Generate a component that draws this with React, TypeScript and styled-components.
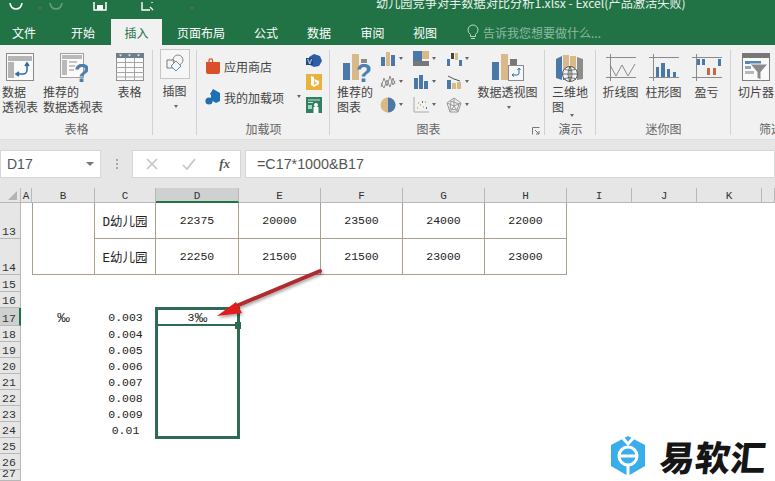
import React from 'react';
import styled, { createGlobalStyle } from 'styled-components';

const Global = createGlobalStyle`
  html, body { margin: 0; padding: 0; background: #fff; }
  #root { width: 775px; height: 481px; overflow: hidden; }
  * { box-sizing: border-box; }
`;
const CJK = `"Noto Sans CJK SC", "Liberation Sans", sans-serif`;
const MONO = `"Liberation Mono", "Noto Sans CJK SC", monospace`;

const Page = styled.div`
  position: relative; width: 775px; height: 481px; overflow: hidden;
  display: flex; flex-direction: column; font-family: ${CJK}; color: #444;
`;
const TitleBar = styled.header`
  height: 19px; flex: none; background: #217346; display: flex; align-items: flex-end;
  padding-bottom: 8px; overflow: hidden; color: #fff;
`;
const Qat = styled.div`width: 376px; flex: none; display: flex; align-items: flex-end;`;
const QatSlot = styled.span<{ $w: number; $faded?: boolean }>`
  width: ${p => p.$w}px; flex: none; display: flex; justify-content: center; align-items: flex-end;
  opacity: ${p => (p.$faded ? 0.3 : 1)};
`;
const DocTitle = styled.div`font-size: 12.2px; line-height: 16px; white-space: nowrap; color: #e8f1ec;`;
const TabBar = styled.nav`height: 26px; flex: none; background: #217346; display: flex;`;
const Tab = styled.div<{ $w: number; $pr?: number; $active?: boolean }>`
  width: ${p => p.$w}px; flex: none; display: flex; align-items: center; justify-content: center;
  padding-right: ${p => p.$pr ?? 0}px;
  font-size: 12px; color: ${p => (p.$active ? '#217346' : '#fff')};
  background: ${p => (p.$active ? '#f1f1f1' : 'transparent')};
`;
const TellMe = styled.div`
  margin-left: 16px; display: flex; align-items: center; gap: 4px; color: #8fb9a3; font-size: 12px;
`;
const Ribbon = styled.section`
  height: 94px; flex: none; background: #f1f1f1; display: flex; overflow: hidden;
`;
const Group = styled.div<{ $w: number; $last?: boolean }>`
  position: relative; width: ${p => p.$w}px; flex: none; display: flex; flex-direction: column;
  &::after {
    content: ''; display: ${p => (p.$last ? 'none' : 'block')};
    position: absolute; right: 0; top: 5px; bottom: 4px; width: 1px; background: #d2d2d2;
  }
`;
const Tools = styled.div<{ $pad?: number }>`
  height: 76px; display: flex; padding-left: ${p => p.$pad ?? 0}px;
`;
const GroupLabel = styled.div<{ $shift?: number }>`
  height: 18px; line-height: 16px; font-size: 12px; text-align: center; color: #666;
  padding-right: ${p => p.$shift ?? 0}px; white-space: nowrap;
`;
const LargeButton = styled.div<{ $w: number }>`
  width: ${p => p.$w}px; flex: none; display: flex; flex-direction: column; align-items: center;
  padding-top: 8px; font-size: 12px; line-height: 15px; color: #444; white-space: nowrap;
`;
const IconBox = styled.div`height: 31px; display: flex; align-items: flex-start; justify-content: center;`;
const Caret = styled.span`
  display: inline-block; width: 0; height: 0; border-left: 2.5px solid transparent; border-right: 2.5px solid transparent;
  border-top: 3px solid #666; vertical-align: middle; margin: 0 0 1px 3px;
`;
const AddinCaret = styled(Caret)`margin-left: 10px;`;
const NameCaret = styled(Caret)`
  border-top: 4px solid #777; border-left-width: 4px; border-right-width: 4px;
`;
const CaretLine = styled.div`height: 15px; line-height: 13px;`;
const IllustrationFrame = styled.div`
  width: 30px; height: 30px; margin-top: -4px; margin-bottom: 4px; background: #f6f6f6; border: 1px solid #c6c6c6;
  display: flex; align-items: center; justify-content: center;
`;
const AddinColumn = styled.div`
  width: 109px; flex: none; display: flex; flex-direction: column; padding: 13px 0 0 8px; gap: 15px;
`;
const AddinRow = styled.div`display: flex; align-items: center; gap: 3px; font-size: 12px; height: 16px; white-space: nowrap; color: #444;`;
const AddinSide = styled.div`display: flex; flex-direction: column; gap: 7px; padding-top: 9px; width: 16px;`;
const ChartGrid = styled.div`
  width: 99px; flex: none; display: grid; grid-template-columns: repeat(3, 33px); grid-auto-rows: 23px; padding-top: 2px;
`;
const ChartCell = styled.div`display: flex; align-items: center;`;
const Launcher = styled.svg`position: absolute; right: 5px; bottom: 4px;`;

const FormulaArea = styled.section`
  height: 49px; flex: none; background: #e6e6e6; display: flex; align-items: flex-start; padding-top: 10px;
  border-top: 1px solid #dedede;
`;
const NameBox = styled.div`
  width: 101px; height: 28px; flex: none; background: #fff; border: 1px solid #d6d6d6; display: flex; align-items: center;
  justify-content: space-between; padding: 0 6px 0 6px; font: 14px "Liberation Sans", sans-serif; color: #555;
`;
const Grip = styled.div`
  width: 31px; flex: none; height: 28px; display: flex; flex-direction: column; align-items: center; justify-content: center; gap: 2px;
`;
const GripDot = styled.i`display: block; width: 2px; height: 2px; background: #a8a8a8;`;
const FxBox = styled.div`
  width: 109px; height: 28px; flex: none; background: #fff; border: 1px solid #d6d6d6; display: flex; align-items: center; justify-content: space-between; padding: 0 10px 0 12px;
`;
const Fx = styled.span`font: italic bold 13px "Liberation Serif", serif; color: #555;`;
const FormulaBox = styled.div`
  margin-left: 4px; flex: 1; height: 28px; background: #fff; border: 1px solid #d6d6d6; display: flex; align-items: center;
  padding-left: 11px; font: 14.3px "Liberation Sans", sans-serif; color: #555;
`;

const Sheet = styled.main`
  flex: none; height: 293px; display: grid; background: #fff; position: relative;
  grid-template-columns: 21px 11px 63px 61px 83px 82px 82px 82px 82px 65px 65px 65px 13px;
  grid-template-rows: 15px 36px 36px 17px 16px 18px repeat(7, 16px) 16px 16px 11px;
  font: 11.5px ${MONO}; color: #222;
`;
const Corner = styled.div`
  grid-column: 1; grid-row: 1; background: #e6e6e6; border-right: 1px solid #b8b8b8; border-bottom: 1px solid #b8b8b8;
  display: flex; align-items: flex-end; justify-content: flex-end; padding: 0 3px 2px 0;
`;
const ColHead = styled.div<{ $c: number; $on?: boolean }>`
  grid-column: ${p => p.$c}; grid-row: 1; font-size: 11px; line-height: 16px; text-align: center; color: #333;
  background: ${p => (p.$on ? '#cfd1d0' : '#e6e6e6')};
  border-right: 1px solid #b8b8b8;
  border-bottom: ${p => (p.$on ? '2px solid #217346' : '1px solid #b8b8b8')};
`;
const RowHead = styled.div<{ $r: number; $on?: boolean }>`
  grid-column: 1; grid-row: ${p => p.$r}; font-size: 11.5px; line-height: 13px; padding-left: 2px;
  display: flex; align-items: flex-end; overflow: hidden; color: #333;
  background: ${p => (p.$on ? '#cfd1d0' : '#e6e6e6')};
  border-bottom: 1px solid #b8b8b8;
  border-right: ${p => (p.$on ? '2px solid #217346' : '1px solid #b8b8b8')};
`;
const Cell = styled.div<{ $c: number; $r: number; $span?: number; $rule?: boolean; $left?: boolean }>`
  grid-column: ${p => p.$c}; grid-row: ${p => p.$r} / span ${p => p.$span ?? 1};
  display: flex; align-items: center; justify-content: center; white-space: nowrap; letter-spacing: 0;
  ${p => p.$rule && 'border-right: 1px solid #a99f8c; border-bottom: 1px solid #a99f8c;'}
  ${p => p.$left && 'border-left: 1px solid #a99f8c;'}
`;
const NameCell = styled(Cell)`font-size: 12.5px;`;
const PerMille = styled.span`font: 13px "Liberation Sans", sans-serif;`;
const Selection = styled.div`
  grid-column: 5; grid-row: 6 / span 8; margin: -1px -1px -1px -1px; position: relative;
  border: 3px solid #2f6b52; z-index: 2; pointer-events: none;
`;
const ActiveEdge = styled.div`height: 16px; border-bottom: 2px solid #2f6b52; margin-right: 2px;`;
const Handle = styled.i`
  position: absolute; right: -4px; top: 12px; width: 6px; height: 7px; background: #2f6b52;
`;
const Arrow = styled.svg`position: absolute; left: 205px; top: 70px; z-index: 3; overflow: visible;`;
const Brand = styled.div`
  position: absolute; right: 0; bottom: 0; width: 172px; height: 50px; display: flex; align-items: center; padding-left: 7px; gap: 14px; z-index: 4;
`;
const BrandName = styled.div`
  font: 900 35px/40px ${CJK}; color: #151515; letter-spacing: 0.5px; transform: skewX(-6deg); white-space: nowrap;
`;

type S = { children: React.ReactNode; w?: number; h?: number };
const Svg = ({ children, w = 30, h = 30 }: S) => <svg width={w} height={h} viewBox={`0 0 ${w} ${h}`}>{children}</svg>;

const BLUE = '#4a78a8', TAN = '#d9b987', GR = '#8e8e8e';

const PivotIcon = () => (
  <Svg w={30} h={30}>
    <rect x="1.5" y="0.5" width="27" height="27" fill="#fafafa" stroke="#8a8a8a" />
    <rect x="3" y="3" width="24" height="5" fill="#b5b5b5" /><rect x="3" y="9" width="6" height="16" fill="#b5b5b5" />
    <path d="M22 11v6a4 4 0 0 1-4 4h-6M20 13l2-3 2 3M14 19l-3 2 3 2" fill="none" stroke="#2b6ea8" strokeWidth="1.6" />
  </Svg>
);
const RecPivotIcon = () => (
  <Svg w={30} h={32}>
    <rect x="2.5" y="0.5" width="23" height="24" fill="#fafafa" stroke="#a0a0a0" />
    <rect x="4" y="2" width="20" height="4" fill="#b9b9b9" /><rect x="4" y="7" width="5" height="15" fill="#b9b9b9" />
    <path d="M11 9h8M11 13h6M11 17h5" stroke="#c4c4c4" strokeWidth="2" />
    <text x="16" y="29" fontFamily="Liberation Sans" fontWeight="700" fontSize="26" fill="#4a7fb0">?</text>
  </Svg>
);
const TableIcon = () => (
  <Svg w={30} h={30}>
    <rect x="1.5" y="0.5" width="27" height="27" fill="#fafafa" stroke="#8f8f8f" />
    <rect x="1" y="0" width="28" height="5" fill="#6d7f8e" />
    <path d="M1 9.5h28M1 14.5h28M1 19.5h28M1 24h28M10.5 5v23M19.5 5v23" stroke="#a5a5a5" />
    <path d="M4 1.5h3l-1.5 2zM13 1.5h3l-1.5 2zM22 1.5h3l-1.5 2z" fill="#eee" />
  </Svg>
);
const ShapesIcon = () => (
  <Svg w={20} h={20}>
    <path d="M2 6h7v8H2z" fill="none" stroke="#7a7a7a" />
    <circle cx="13" cy="6" r="5" fill="none" stroke="#8a8a8a" />
    <path d="M11 7l5 5-5 5-5-5z" fill="#f6f6f6" stroke="#5f8fb5" />
  </Svg>
);
const StoreIcon = () => (
  <Svg w={16} h={16}>
    <path d="M1 4h14v10q0 2-2 2H3q-2 0-2-2z" fill="#d9502a" />
    <path d="M4 5V2.5Q4 .8 5.8 .8t1.8 1.7V5" fill="none" stroke="#d9502a" strokeWidth="1.2" />
  </Svg>
);
const AddinIcon = () => (
  <Svg w={16} h={16}>
    <path d="M8 0l7 4v8l-4 2-5-3V6l-1-1z" fill="#1f6fb5" /><circle cx="4" cy="12" r="3.6" fill="#1f6fb5" />
  </Svg>
);
const VisioIcon = () => (
  <Svg w={16} h={13}>
    <path d="M3 3l5-3 6 2 2 5-3 5-5 1-4-2z" fill="#2c5fa8" /><rect x="0" y="4" width="7" height="7" fill="#1d4a8c" />
    <text x="1.2" y="10" fill="#fff" fontSize="7" fontFamily="Liberation Sans">V</text>
  </Svg>
);
const BingIcon = () => (
  <Svg w={16} h={16}><rect width="16" height="16" fill="#e9b23a" /><path d="M5 2l3 1v8l3-2-2-1-1-3 5 2v3l-5 3-3-2z" fill="#fff" /></Svg>
);
const PeopleIcon = () => (
  <Svg w={16} h={16}>
    <rect width="16" height="16" fill="#2f7f62" /><path d="M2 3h12M2 5.5h5" stroke="#cfe4da" />
    <circle cx="10" cy="8" r="2" fill="#fff" /><rect x="7.5" y="10" width="5" height="6" fill="#fff" /><rect x="2" y="8" width="4" height="4" fill="#a9d2c0" />
  </Svg>
);
const RecChartIcon = () => (
  <Svg w={32} h={32}>
    <rect x="4" y="10" width="7" height="17" fill={BLUE} /><rect x="13" y="1" width="7" height="26" fill={TAN} />
    <rect x="22" y="6" width="6" height="4" fill="#8a8a8a" />
    <text x="17" y="29" fontFamily="Liberation Sans" fontWeight="700" fontSize="26" fill="#4a7fb0">?</text>
  </Svg>
);
const small: Record<string, React.ReactNode> = {
  col: <><rect x="1" y="6" width="4" height="9" fill={BLUE} /><rect x="6" y="1" width="4" height="14" fill={TAN} /><rect x="11" y="4" width="4" height="11" fill={BLUE} /></>,
  tree: <><rect x="0" y="0" width="9" height="10" fill={BLUE} /><rect x="9" y="0" width="7" height="8" fill={TAN} /><rect x="0" y="10" width="16" height="5" fill="#777" /></>,
  water: <><path d="M1 15V8h3v7zM5 8V2h3v6zM9 2h3v7H9zM13 9h3v6h-3z" fill={BLUE} /><path d="M5 8V2h3v6z" fill="#444" /><path d="M9 2h3v7H9z" fill={TAN} /></>,
  line: <path d="M1 13l3-9 3 8 3-10 3 9 2-4M1 9l3 5 3-8 3 7 3-9 2 6" fill="none" stroke={GR} />,
  stat: <><rect x="1" y="4" width="4" height="11" fill={BLUE} /><rect x="6" y="1" width="4" height="14" fill={BLUE} /><rect x="11" y="7" width="4" height="8" fill={BLUE} /></>,
  combo: <><rect x="1" y="6" width="4" height="9" fill={BLUE} /><rect x="6" y="9" width="4" height="6" fill={TAN} /><rect x="11" y="8" width="4" height="7" fill={TAN} /><path d="M2 2l6 3 6 2" stroke="#555" fill="none" /></>,
  pie: <><circle cx="8" cy="8" r="7.5" fill={TAN} /><path d="M8 8V.5a7.5 7.5 0 0 1 0 15z" fill={BLUE} /></>,
  scatter: <><path d="M1 0v15h15" fill="none" stroke="#aaa" /><path d="M4 11h1M7 8h1M10 10h1M12 5h1M5 6h1" stroke={TAN} strokeWidth="2" /><path d="M9 5h1M13 11h1" stroke={BLUE} strokeWidth="2" /></>,
  radar: <path d="M8 1l7 5-3 9H4L1 6zM8 1v8M1 6l7 3 7-3M4 15l4-6 4 6M5 4l8 3-2 6-7-1z" fill="none" stroke="#9a9a9a" />,
};
const SmallChart = ({ k }: { k: string }) => <Svg w={16} h={16}>{small[k]}</Svg>;

const PivotChartIcon = () => (
  <Svg w={32} h={30}>
    <rect x="0" y="9" width="7" height="18" fill={BLUE} /><rect x="9" y="1" width="7" height="26" fill={TAN} /><rect x="18" y="6" width="7" height="10" fill="#777" />
    <rect x="16.5" y="12.5" width="15" height="15" fill="#f7f7f7" stroke="#8a8a8a" />
    <path d="M27 16v4a2 2 0 0 1-2 2h-4M25.5 17l1.5-2 1.5 2M22 20.5l-2 1.5 2 1.5" fill="none" stroke="#2b6ea8" />
  </Svg>
);
const MapIcon = () => (
  <Svg w={32} h={30}>
    <path d="M2 6l6-3v24l-6-2z" fill={BLUE} /><path d="M9 2h6v15H9z" fill={TAN} /><path d="M16 3h6v14h-6z" fill={TAN} /><path d="M23 4l6 2v20l-6 1z" fill="#8d8d8d" />
    <path d="M9 17v10h13V17z" fill={BLUE} />
    <circle cx="16" cy="21" r="7.5" fill="#f4f4f4" stroke="#555" /><path d="M8.5 21h15M16 13.500v15M11 16.500q5 2 10 0M11 25.500q5-2 10 0M16 13.500q-4 7.500 0 15M16 13.500q4 7.500 0 15" fill="none" stroke="#555" strokeWidth=".8" />
  </Svg>
);
const SparkFrame = ({ children }: { children: React.ReactNode }) => (
  <Svg w={32} h={30}><path d="M1 4.500h30M1 24.500h30M5.500 1v27" stroke="#8a8a8a" fill="none" />{children}</Svg>
);
const SparkLine = () => <SparkFrame><path d="M5 12l6 11 6-11 6 11 7-12" fill="none" stroke="#8a8a8a" /></SparkFrame>;
const SparkCol = () => <SparkFrame><path d="M8 14h3v10H8zM13 10h4v14h-4zM19 16h3v8h-3zM25 19h3v5h-3z" fill={BLUE} /></SparkFrame>;
const SparkWin = () => <SparkFrame><path d="M6 6h3v6H6zM11 6h3v6h-3zM27 6h3v7h-3z" fill={BLUE} /><path d="M16 15h3v7h-3zM22 15h3v7h-3z" fill="#bf6a45" /></SparkFrame>;
const SlicerIcon = () => (
  <Svg w={30} h={30}>
    <rect x="1.500" y="0.500" width="27" height="27" fill="#fafafa" stroke="#7d7d7d" />
    <rect x="1" y="0" width="28" height="5" fill="#777" />
    <rect x="4" y="8" width="16" height="3" fill="#5a86b3" /><rect x="4" y="18" width="9" height="3" fill="#b9b9b9" /><rect x="4" y="13" width="6" height="3" fill="#8da9c4" />
    <path d="M9 11h18l-7 8v8l-4-2v-6z" fill="#8a8a8a" stroke="#fafafa" />
  </Svg>
);

const CancelX = () => <Svg w={14} h={14}><path d="M2 2l10 10M12 2L2 12" stroke="#c4c4c4" strokeWidth="1.6" /></Svg>;
const CheckMark = () => <Svg w={14} h={14}><path d="M1 8l4 4 8-10" fill="none" stroke="#c4c4c4" strokeWidth="1.6" /></Svg>;
const Bulb = () => <Svg w={12} h={16}><path d="M3.500 10.500Q1 8.500 1 6a5 5 0 0 1 10 0q0 2.500-2.500 4.500v2h-5zM4 14.500h4" fill="none" stroke="#bcd6c8" /></Svg>;

const tabs: [string, number, number][] = [['文件', 55, 7], ['开始', 56, 0], ['插入', 51, 0], ['页面布局', 78, 0], ['公式', 52, 0], ['数据', 54, 0], ['审阅', 53, 0], ['视图', 52, 0]];
const cols = ['A', 'B', 'C', 'D', 'E', 'F', 'G', 'H', 'I', 'J', 'K', ''];
const rows: [number, number][] = [[13, 2], [14, 3], [15, 4], [16, 5], [17, 6], [18, 7], [19, 8], [20, 9], [21, 10], [22, 11], [23, 12], [24, 13], [25, 14], [26, 15], [27, 16]];
const table: [string, string[]][] = [
  ['D幼儿园', ['22375', '20000', '23500', '24000', '22000']],
  ['E幼儿园', ['22250', '21500', '21500', '23000', '23000']],
];
const rates = ['0.003', '0.004', '0.005', '0.006', '0.007', '0.008', '0.009', '0.01'];
const charts = ['col', 'tree', 'water', 'line', 'stat', 'combo', 'pie', 'scatter', 'radar'];

export default function App() {
  return (
    <Page>
      <Global />
      <TitleBar>
        <Qat>
          <QatSlot $w={32}><Svg w={16} h={8}><path d="M2 0q1 6 6 6t6-6" fill="none" stroke="#fff" strokeWidth="1.6" /></Svg></QatSlot>
          <QatSlot $w={12}><Caret /></QatSlot>
          <QatSlot $w={24} $faded><Svg w={16} h={8}><path d="M2 0q1 6 6 6t6-6" fill="none" stroke="#fff" strokeWidth="1.6" /></Svg></QatSlot>
          <QatSlot $w={12} $faded><Caret /></QatSlot>
          <QatSlot $w={40}><Svg w={14} h={9}><path d="M1 0v8h12V0" fill="none" stroke="#fff" strokeWidth="1.5" /><rect x="4" y="3" width="6" height="5" fill="#fff" /></Svg></QatSlot>
          <QatSlot $w={55}><Svg w={14} h={9}><path d="M1 0v8h8M11 0v1M9 5l3 3" fill="none" stroke="#fff" strokeWidth="1.4" /></Svg></QatSlot>
          <QatSlot $w={30}><Caret /></QatSlot>
        </Qat>
        <DocTitle>幼儿园竞争对手数据对比分析1.xlsx - Excel(产品激活失败)</DocTitle>
      </TitleBar>
      <TabBar>
        {tabs.map(([t, w, pr]) => <Tab key={t} $w={w} $pr={pr} $active={t === '插入'}>{t}</Tab>)}
        <TellMe><Bulb />告诉我您想要做什么...</TellMe>
      </TabBar>
      <Ribbon>
        <Group $w={153}>
          <Tools>
            <LargeButton $w={40}><IconBox><PivotIcon /></IconBox>数据<br />透视表</LargeButton>
            <LargeButton $w={66}><IconBox><RecPivotIcon /></IconBox>推荐的<br />数据透视表</LargeButton>
            <LargeButton $w={47}><IconBox><TableIcon /></IconBox>表格</LargeButton>
          </Tools>
          <GroupLabel>表格</GroupLabel>
        </Group>
        <Group $w={44}>
          <Tools>
            <LargeButton $w={43}>
              <IllustrationFrame><ShapesIcon /></IllustrationFrame>
              插图
              <CaretLine><Caret /></CaretLine>
            </LargeButton>
          </Tools>
        </Group>
        <Group $w={133}>
          <Tools>
            <AddinColumn>
              <AddinRow><StoreIcon />应用商店</AddinRow>
              <AddinRow><AddinIcon />我的加载项<AddinCaret /></AddinRow>
            </AddinColumn>
            <AddinSide><VisioIcon /><BingIcon /><PeopleIcon /></AddinSide>
          </Tools>
          <GroupLabel>加载项</GroupLabel>
        </Group>
        <Group $w={215}>
          <Tools>
            <LargeButton $w={50}><IconBox><RecChartIcon /></IconBox>推荐的<br />图表</LargeButton>
            <ChartGrid>
              {charts.map(k => <ChartCell key={k}><SmallChart k={k} /><Caret /></ChartCell>)}
            </ChartGrid>
            <LargeButton $w={57}><IconBox><PivotChartIcon /></IconBox>数据透视图<CaretLine><Caret /></CaretLine></LargeButton>
          </Tools>
          <GroupLabel $shift={18}>图表</GroupLabel>
          <Launcher width="8" height="8" viewBox="0 0 8 8"><path d="M0.500 7.500V.5h7M3 3l4 4M4 7h3V4" fill="none" stroke="#777" /></Launcher>
        </Group>
        <Group $w={51}>
          <Tools>
            <LargeButton $w={50}><IconBox><MapIcon /></IconBox>三维地<br />图<Caret /></LargeButton>
          </Tools>
          <GroupLabel>演示</GroupLabel>
        </Group>
        <Group $w={135}>
          <Tools $pad={3}>
            <LargeButton $w={43}><IconBox><SparkLine /></IconBox>折线图</LargeButton>
            <LargeButton $w={43}><IconBox><SparkCol /></IconBox>柱形图</LargeButton>
            <LargeButton $w={43}><IconBox><SparkWin /></IconBox>盈亏</LargeButton>
          </Tools>
          <GroupLabel>迷你图</GroupLabel>
        </Group>
        <Group $w={92} $last>
          <Tools><LargeButton $w={50}><IconBox><SlicerIcon /></IconBox>切片器</LargeButton></Tools>
          <GroupLabel>筛选器</GroupLabel>
        </Group>
      </Ribbon>
      <FormulaArea>
        <NameBox>D17<NameCaret /></NameBox>
        <Grip><GripDot /><GripDot /><GripDot /></Grip>
        <FxBox><CancelX /><CheckMark /><Fx>fx</Fx></FxBox>
        <FormulaBox>=C17*1000&amp;B17</FormulaBox>
      </FormulaArea>
      <Sheet>
        <Corner><svg width="9" height="9" viewBox="0 0 9 9"><path d="M9 0v9H0z" fill="#b4b4b4" /></svg></Corner>
        {cols.map((c, i) => <ColHead key={i} $c={i + 2} $on={c === 'D'}>{c}</ColHead>)}
        {rows.map(([n, r]) => <RowHead key={n} $r={r} $on={n === 17}>{n}</RowHead>)}
        <Cell $c={3} $r={2} $span={2} $rule $left />
        {table.map(([name, vals], i) => (
          <React.Fragment key={name}>
            <NameCell $c={4} $r={i + 2} $rule>{name}</NameCell>
            {vals.map((v, j) => <Cell key={j} $c={j + 5} $r={i + 2} $rule>{v}</Cell>)}
          </React.Fragment>
        ))}
        <Cell $c={3} $r={6}><PerMille>‰</PerMille></Cell>
        {rates.map((v, i) => <Cell key={v} $c={4} $r={i + 6}>{v}</Cell>)}
        <Cell $c={5} $r={6}>3<PerMille>‰</PerMille></Cell>
        <Selection><ActiveEdge /><Handle /></Selection>
        <Arrow width="120" height="60" viewBox="0 0 120 60">
          <defs>
            <filter id="arrowShadow" x="-20%" y="-30%" width="140%" height="170%">
              <feDropShadow dx="1" dy="2" stdDeviation="1.5" floodColor="#000" floodOpacity="0.35" />
            </filter>
          </defs>
          <g filter="url(#arrowShadow)">
            <path d="M115 13L29 49" stroke="#b02a2e" strokeWidth="4" strokeLinecap="round" />
            <path d="M12 58L31 44 37 55z" fill="#e01b1f" />
          </g>
        </Arrow>
      </Sheet>
      <Brand>
        <svg width="36" height="42" viewBox="0 0 36 42">
          <path d="M18 1l17 9v21L18 41 1 31V10z" fill="#3aaeea" />
          <path d="M11 1l7 8 7-8" fill="none" stroke="#fff" strokeWidth="3" />
          <circle cx="18" cy="21" r="9" fill="none" stroke="#fff" strokeWidth="3" />
          <path d="M10 21h16M18 30v11" stroke="#fff" strokeWidth="3" />
        </svg>
        <BrandName>易软汇</BrandName>
      </Brand>
    </Page>
  );
}
